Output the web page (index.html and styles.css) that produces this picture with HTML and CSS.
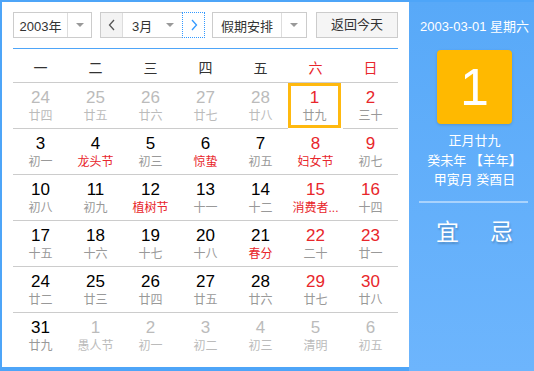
FILE: index.html
```html
<!DOCTYPE html>
<html lang="zh-CN">

<head>
    <meta charset="UTF-8">
    <title>万年历</title>
    <link rel="stylesheet" href="styles.css">
</head>

<body>
    <div class="calendar">
        <div class="main-panel">
            <div class="toolbar">
                <div class="select year-select">
                    <span class="select-text">2003年</span>
                    <span class="select-arrow"><i class="caret"></i></span>
                </div>
                <div class="select month-group">
                    <span class="nav-btn prev">
                        <svg width="8" height="12" viewBox="0 0 8 12"><polyline points="6,1 1.5,6 6,11" fill="none" stroke="#555" stroke-width="1.3"/></svg>
                    </span>
                    <span class="month-text">3月</span>
                    <i class="caret month-caret"></i>
                    <span class="nav-btn next">
                        <svg width="8" height="12" viewBox="0 0 8 12"><polyline points="2,1 6.5,6 2,11" fill="none" stroke="#3399ff" stroke-width="1.3"/></svg>
                    </span>
                </div>
                <div class="select holiday-select">
                    <span class="select-text">假期安排</span>
                    <span class="select-arrow"><i class="caret"></i></span>
                </div>
                <div class="today-btn">返回今天</div>
            </div>

            <div class="week-head">
                <span>一</span><span>二</span><span>三</span><span>四</span><span>五</span>
                <span class="weekend">六</span><span class="weekend">日</span>
            </div>

            <div class="days">
                <div class="day other"><b>24</b><em>廿四</em></div>
                <div class="day other"><b>25</b><em>廿五</em></div>
                <div class="day other"><b>26</b><em>廿六</em></div>
                <div class="day other"><b>27</b><em>廿七</em></div>
                <div class="day other"><b>28</b><em>廿八</em></div>
                <div class="day weekend selected"><b>1</b><em>廿九</em></div>
                <div class="day weekend"><b>2</b><em>三十</em></div>

                <div class="day"><b>3</b><em>初一</em></div>
                <div class="day"><b>4</b><em class="fest">龙头节</em></div>
                <div class="day"><b>5</b><em>初三</em></div>
                <div class="day"><b>6</b><em class="fest">惊蛰</em></div>
                <div class="day"><b>7</b><em>初五</em></div>
                <div class="day weekend"><b>8</b><em class="fest">妇女节</em></div>
                <div class="day weekend"><b>9</b><em>初七</em></div>

                <div class="day"><b>10</b><em>初八</em></div>
                <div class="day"><b>11</b><em>初九</em></div>
                <div class="day"><b>12</b><em class="fest">植树节</em></div>
                <div class="day"><b>13</b><em>十一</em></div>
                <div class="day"><b>14</b><em>十二</em></div>
                <div class="day weekend"><b>15</b><em class="fest">消费者...</em></div>
                <div class="day weekend"><b>16</b><em>十四</em></div>

                <div class="day"><b>17</b><em>十五</em></div>
                <div class="day"><b>18</b><em>十六</em></div>
                <div class="day"><b>19</b><em>十七</em></div>
                <div class="day"><b>20</b><em>十八</em></div>
                <div class="day"><b>21</b><em class="fest">春分</em></div>
                <div class="day weekend"><b>22</b><em>二十</em></div>
                <div class="day weekend"><b>23</b><em>廿一</em></div>

                <div class="day"><b>24</b><em>廿二</em></div>
                <div class="day"><b>25</b><em>廿三</em></div>
                <div class="day"><b>26</b><em>廿四</em></div>
                <div class="day"><b>27</b><em>廿五</em></div>
                <div class="day"><b>28</b><em>廿六</em></div>
                <div class="day weekend"><b>29</b><em>廿七</em></div>
                <div class="day weekend"><b>30</b><em>廿八</em></div>

                <div class="day last"><b>31</b><em>廿九</em></div>
                <div class="day other last"><b>1</b><em>愚人节</em></div>
                <div class="day other last"><b>2</b><em>初一</em></div>
                <div class="day other last"><b>3</b><em>初二</em></div>
                <div class="day other last"><b>4</b><em>初三</em></div>
                <div class="day other last"><b>5</b><em>清明</em></div>
                <div class="day other last"><b>6</b><em>初五</em></div>
            </div>
        </div>

        <div class="side-panel">
            <div class="side-date">2003-03-01 星期六</div>
            <div class="big-day">1</div>
            <div class="lunar-info">
                <div>正月廿九</div>
                <div>癸未年 【羊年】</div>
                <div>甲寅月 癸酉日</div>
            </div>
            <div class="side-divider"></div>
            <div class="yi-ji">
                <span>宜</span>
                <span>忌</span>
            </div>
        </div>
    </div>
</body>

</html>
```

FILE: styles.css
```css
body {
    margin: 0;
    font-family: "Liberation Sans", "Noto Sans CJK SC", sans-serif;
    background-color: #4ea5f8;
}

.calendar {
    display: flex;
    width: 534px;
    height: 371px;
    padding: 2px 0 4px 2px;
    box-sizing: border-box;
}

.main-panel {
    width: 407px;
    background-color: #ffffff;
    padding: 10px 11px 0 11px;
    box-sizing: border-box;
}

/* toolbar */
.toolbar {
    display: flex;
    height: 26px;
    padding-bottom: 10px;
    border-bottom: 1px solid #4ea5f8;
}

.select {
    display: flex;
    align-items: center;
    border: 1px solid #cccccc;
    box-sizing: border-box;
    height: 26px;
    font-size: 13px;
    color: #333333;
}

.select-text {
    flex: 1;
    text-align: center;
}

.select-arrow {
    display: flex;
    align-items: center;
    justify-content: center;
    width: 23px;
    height: 100%;
    border-left: 1px solid #dddddd;
}

.caret {
    width: 0;
    height: 0;
    border-left: 4px solid transparent;
    border-right: 4px solid transparent;
    border-top: 4px solid #999999;
}

.year-select {
    width: 79px;
    margin-right: 8px;
}

.month-group {
    width: 105px;
    margin-right: 7px;
}

.nav-btn {
    display: flex;
    align-items: center;
    justify-content: center;
    width: 22px;
    height: 100%;
    box-sizing: border-box;
}

.nav-btn.prev {
    background-color: #f3f3f3;
    border-right: 1px solid #dddddd;
}

.nav-btn.next {
    width: 23px;
    height: 26px;
    margin: -1px -1px -1px 0;
    border: 1px dotted #3399ff;
    background-color: #ffffff;
}

.month-text {
    flex: 1;
    padding-left: 9px;
}

.month-caret {
    margin-right: 8px;
}

.holiday-select {
    width: 95px;
}

.holiday-select .select-arrow {
    width: 24px;
}

.today-btn {
    margin-left: auto;
    width: 82px;
    height: 26px;
    box-sizing: border-box;
    border: 1px solid #cccccc;
    background-color: #f5f5f5;
    font-size: 13px;
    color: #333333;
    line-height: 24px;
    text-align: center;
}

/* week header */
.week-head {
    display: grid;
    grid-template-columns: repeat(7, 1fr);
    height: 33px;
    border-bottom: 1px solid #cccccc;
    font-size: 14px;
    color: #333333;
    line-height: 38px;
    text-align: center;
}

.week-head .weekend {
    color: #e8262b;
}

/* days */
.days {
    display: grid;
    grid-template-columns: repeat(7, 1fr);
}

.day {
    height: 46px;
    border-bottom: 1px solid #cccccc;
    box-sizing: border-box;
    padding-top: 5px;
    text-align: center;
}

.day.last {
    border-bottom: none;
}

.day b {
    display: block;
    font-size: 17px;
    font-weight: normal;
    line-height: 20px;
    color: #000000;
}

.day em {
    display: block;
    font-style: normal;
    font-size: 12px;
    line-height: 17px;
    color: #999999;
}

.day.weekend b {
    color: #e8262b;
}

.day em.fest {
    color: #e8262b;
}

.day.other b,
.day.other em {
    color: #bbbbbb;
}

.day.selected {
    border: 3px solid #ffb90f;
    height: 45px;
    margin-right: 2px;
    padding-top: 2px;
}

/* side panel */
.side-panel {
    flex: 1;
    display: flex;
    flex-direction: column;
    align-items: center;
    padding-left: 6px;
    background: linear-gradient(#58a9f8, #6db5fd);
    color: #ffffff;
    margin-bottom: -4px;
}

.side-date {
    font-size: 13px;
    margin-top: 16px;
    line-height: 18px;
    white-space: nowrap;
}

.big-day {
    width: 75px;
    height: 74px;
    margin-top: 14px;
    background-color: #ffb900;
    border-radius: 4px;
    box-shadow: 0 1px 3px rgba(0, 0, 0, 0.15);
    font-size: 52px;
    line-height: 74px;
    text-align: center;
}

.lunar-info {
    margin-top: 7px;
    font-size: 13px;
    line-height: 19.5px;
    text-align: center;
}

.side-divider {
    width: 109px;
    height: 2px;
    margin-top: 11px;
    margin-left: -2px;
    background-color: rgba(255, 255, 255, 0.45);
}

.yi-ji {
    display: flex;
    gap: 31px;
    margin-top: 15px;
    font-size: 23px;
    line-height: 28px;
    text-shadow: 1px 2px 2px rgba(0, 0, 0, 0.2);
}
```
